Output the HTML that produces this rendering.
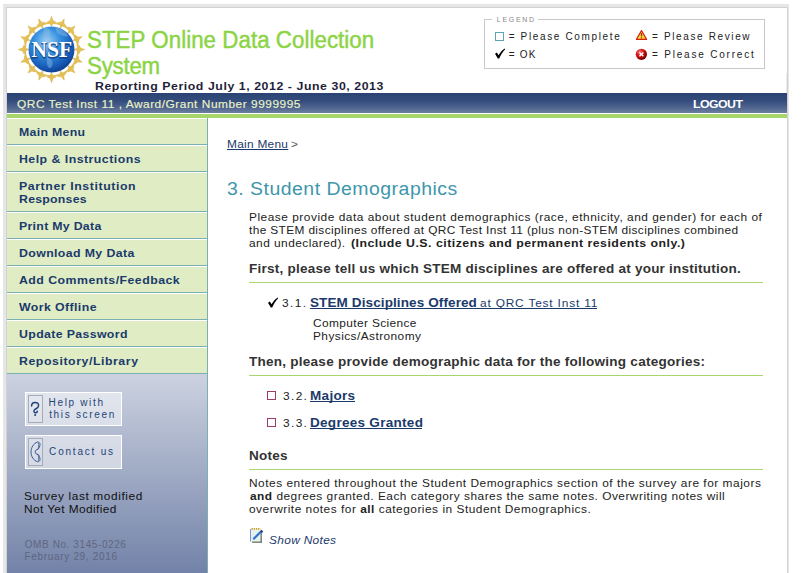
<!DOCTYPE html>
<html><head><meta charset="utf-8">
<style>
html,body{margin:0;padding:0;}
body{width:801px;height:573px;overflow:hidden;position:relative;background:#fff;font-family:"Liberation Sans",sans-serif;}
.a{position:absolute;}
.t{position:absolute;white-space:nowrap;}
</style></head><body>
<div class="a" style="left:3px;top:4px;width:786px;height:580px;background:#e6e6e6"></div>
<div class="a" style="left:6px;top:7px;width:782px;height:580px;background:#d2d2d2"></div>
<div class="a" style="left:7px;top:8px;width:780px;height:580px;background:#fff"></div>
<div class="a" style="left:786px;top:73px;width:1px;height:20px;background:#ebebeb"></div>
<svg class="a" style="left:0;top:0" width="110" height="95" viewBox="0 0 110 95">
<defs>
<radialGradient id="gl" cx="0.4" cy="0.32" r="0.72">
<stop offset="0" stop-color="#a0d2f6"/><stop offset="0.38" stop-color="#3892e0"/><stop offset="0.78" stop-color="#175cb8"/><stop offset="1" stop-color="#0e3c8c"/>
</radialGradient>
</defs>
<g fill="#e6c258" stroke="#d4ad40" stroke-width="0.5"><polygon points="51.50,16.30 50.09,20.49 47.30,21.90 50.09,23.31 51.50,26.50 52.91,23.31 55.70,21.90 52.91,20.49"/><polygon points="64.21,18.83 61.30,22.15 58.18,22.39 60.21,24.77 60.30,28.25 62.83,25.85 65.94,25.61 63.91,23.24"/><polygon points="74.98,26.02 71.02,27.98 68.05,27.01 69.02,29.98 67.76,33.24 71.02,31.98 73.99,32.95 73.02,29.98"/><polygon points="82.17,36.79 77.76,37.09 75.39,35.06 75.15,38.17 72.75,40.70 76.23,40.79 78.61,42.82 78.85,39.70"/><polygon points="84.70,49.50 80.51,48.09 79.10,45.30 77.69,48.09 74.50,49.50 77.69,50.91 79.10,53.70 80.51,50.91"/><polygon points="82.17,62.21 78.85,59.30 78.61,56.18 76.23,58.21 72.75,58.30 75.15,60.83 75.39,63.94 77.76,61.91"/><polygon points="74.98,72.98 73.02,69.02 73.99,66.05 71.02,67.02 67.76,65.76 69.02,69.02 68.05,71.99 71.02,71.02"/><polygon points="64.21,80.17 63.91,75.76 65.94,73.39 62.83,73.15 60.30,70.75 60.21,74.23 58.18,76.61 61.30,76.85"/><polygon points="51.50,82.70 52.91,78.51 55.70,77.10 52.91,75.69 51.50,72.50 50.09,75.69 47.30,77.10 50.09,78.51"/><polygon points="38.79,80.17 41.70,76.85 44.82,76.61 42.79,74.23 42.70,70.75 40.17,73.15 37.06,73.39 39.09,75.76"/><polygon points="28.02,72.98 31.98,71.02 34.95,71.99 33.98,69.02 35.24,65.76 31.98,67.02 29.01,66.05 29.98,69.02"/><polygon points="20.83,62.21 25.24,61.91 27.61,63.94 27.85,60.83 30.25,58.30 26.77,58.21 24.39,56.18 24.15,59.30"/><polygon points="18.30,49.50 22.49,50.91 23.90,53.70 25.31,50.91 28.50,49.50 25.31,48.09 23.90,45.30 22.49,48.09"/><polygon points="20.83,36.79 24.15,39.70 24.39,42.82 26.77,40.79 30.25,40.70 27.85,38.17 27.61,35.06 25.24,37.09"/><polygon points="28.02,26.02 29.98,29.98 29.01,32.95 31.98,31.98 35.24,33.24 33.98,29.98 34.95,27.01 31.98,27.98"/><polygon points="38.79,18.83 39.09,23.24 37.06,25.61 40.17,25.85 42.70,28.25 42.79,24.77 44.82,22.39 41.70,22.15"/></g>
<circle cx="51.5" cy="49.5" r="26.6" fill="none" stroke="#e2bf55" stroke-width="1.9"/>
<circle cx="51.5" cy="49.5" r="23" fill="url(#gl)"/>
<g fill="#8fbde8" opacity="0.45"><path d="M44,28 C48,27 52,30 50,34 C47,37 52,40 49,43 C46,41 42,36 44,28Z"/><path d="M55,27 C60,28 66,31 68,36 C64,38 60,34 57,33Z"/><path d="M47,57 C50,58 54,61 52,66 C50,70 48,68 47,64Z"/></g>
<text x="51.8" y="57.3" text-anchor="middle" font-family="Liberation Serif" font-weight="bold" font-size="23.5" fill="#0d3270" stroke="#0d3270" stroke-width="1.2" opacity="0.7" transform="translate(0.3,0.5)" textLength="41" lengthAdjust="spacingAndGlyphs">NSF</text>
<text x="51.8" y="57.3" text-anchor="middle" font-family="Liberation Serif" font-weight="bold" font-size="23.5" fill="#fff" textLength="41" lengthAdjust="spacingAndGlyphs">NSF</text>
</svg>
<div id="t1" class="t" style="left:86.74px;top:27.03px;font-size:23px;line-height:26px;font-weight:normal;color:#8bd444;letter-spacing:0.045px;transform:scaleX(0.970);transform-origin:0 0;-webkit-text-stroke:0.45px #8bd444;">STEP Online Data Collection</div>
<div id="t2" class="t" style="left:86.89px;top:53.03px;font-size:23px;line-height:26px;font-weight:normal;color:#8bd444;letter-spacing:-0.246px;transform:scaleX(0.970);transform-origin:0 0;-webkit-text-stroke:0.45px #8bd444;">System</div>
<div id="rep" class="t" style="left:94.66px;top:79.69px;font-size:11px;line-height:13px;font-weight:bold;color:#1f1f3a;letter-spacing:0.502px;transform:scaleX(1.120);transform-origin:0 0;">Reporting Period July 1, 2012 - June 30, 2013</div>
<div class="a" style="left:484px;top:19px;width:279px;height:48px;border:1px solid #c9c9c9"></div>
<div class="a" style="left:492px;top:18px;width:46px;height:3px;background:#fff"></div>
<div id="lg" class="t" style="left:496.84px;top:15.07px;font-size:7px;line-height:9px;font-weight:normal;color:#888;letter-spacing:1.684px;">LEGEND</div>
<div class="a" style="left:495px;top:32px;width:7px;height:7px;border:1px solid #5aa5b6"></div>
<svg class="a" style="left:494px;top:48.3px" width="12" height="12" viewBox="0 0 12 12"><path d="M1,5.8 L2.9,4.6 L4.5,7.3 C6.3,4.3 8.3,2 10.8,0.5 L11.2,1.2 C8.8,3.6 6.7,7 5.2,10.6 L3.8,10.6 Z" fill="#000"/></svg>
<svg class="a" style="left:635px;top:29px" width="13" height="12" viewBox="0 0 13 12"><path d="M6.5,1.6 L11.6,10.4 L1.4,10.4 Z" fill="#e6e23a" stroke="#d8200c" stroke-width="1.15" stroke-linejoin="round"/><path d="M6.5,4.2 L6.5,7.4" stroke="#c81808" stroke-width="1.3"/><rect x="5.85" y="8.2" width="1.3" height="1.2" fill="#c81808"/></svg>
<svg class="a" style="left:635px;top:48px" width="13" height="13" viewBox="0 0 13 13"><defs><radialGradient id="rc" cx="0.35" cy="0.3" r="0.8"><stop offset="0" stop-color="#f07a7a"/><stop offset="0.45" stop-color="#d01010"/><stop offset="0.8" stop-color="#8a0000"/><stop offset="1" stop-color="#4a0000"/></radialGradient></defs><circle cx="6.4" cy="6.3" r="5.6" fill="url(#rc)"/><path d="M4.4,4.4 L8.4,8.2 M8.4,4.4 L4.4,8.2" stroke="#fff" stroke-width="1.35"/></svg>
<div id="l1" class="t" style="left:508.71px;top:30.54px;font-size:10px;line-height:12px;font-weight:normal;color:#222;letter-spacing:1.640px;">= Please Complete</div>
<div id="l2" class="t" style="left:508.71px;top:48.53px;font-size:10px;line-height:12px;font-weight:normal;color:#222;letter-spacing:1.180px;">= OK</div>
<div id="l3" class="t" style="left:652.08px;top:30.54px;font-size:10px;line-height:12px;font-weight:normal;color:#222;letter-spacing:1.624px;">= Please Review</div>
<div id="l4" class="t" style="left:652.08px;top:48.53px;font-size:10px;line-height:12px;font-weight:normal;color:#222;letter-spacing:1.791px;">= Please Correct</div>
<div class="a" style="left:7px;top:93px;width:780px;height:20px;background:linear-gradient(#2a4373 0%,#344d7d 40%,#51668f 75%,#6c7fa2 100%)"></div>
<div class="a" style="left:7px;top:114px;width:780px;height:4px;background:#a8d66c"></div>
<div id="qrc" class="t" style="left:16.62px;top:97.69px;font-size:11px;line-height:13px;font-weight:normal;color:#eaf3c6;letter-spacing:0.490px;transform:scaleX(1.080);transform-origin:0 0;-webkit-text-stroke:0.15px #eaf3c6;">QRC Test Inst 11 , Award/Grant Number 9999995</div>
<div id="logout" class="t" style="left:692.70px;top:97.69px;font-size:11px;line-height:13px;font-weight:bold;color:#fff;letter-spacing:-0.493px;transform:scaleX(1.120);transform-origin:0 0;">LOGOUT</div>
<div class="a" style="left:7px;top:118px;width:200px;height:256px;background:#dfecc4"></div>
<div class="a" style="left:7px;top:374px;width:200px;height:200px;background:linear-gradient(#ccd2e0,#7282a8)"></div>
<div class="a" style="left:7px;top:118px;width:200px;height:1px;background:#fff"></div>
<div class="a" style="left:7px;top:144px;width:200px;height:1px;background:#7ab0b2"></div>
<div id="s0_0" class="t" style="left:18.85px;top:125.69px;font-size:11px;line-height:13px;font-weight:bold;color:#1b3a6b;letter-spacing:0.264px;transform:scaleX(1.120);transform-origin:0 0;">Main Menu</div>
<div class="a" style="left:7px;top:145px;width:200px;height:1px;background:#fff"></div>
<div class="a" style="left:7px;top:171px;width:200px;height:1px;background:#7ab0b2"></div>
<div id="s1_0" class="t" style="left:18.85px;top:152.69px;font-size:11px;line-height:13px;font-weight:bold;color:#1b3a6b;letter-spacing:0.424px;transform:scaleX(1.120);transform-origin:0 0;">Help &amp; Instructions</div>
<div class="a" style="left:7px;top:172px;width:200px;height:1px;background:#fff"></div>
<div class="a" style="left:7px;top:211px;width:200px;height:1px;background:#7ab0b2"></div>
<div id="s2_0" class="t" style="left:18.85px;top:179.69px;font-size:11px;line-height:13px;font-weight:bold;color:#1b3a6b;letter-spacing:0.519px;transform:scaleX(1.120);transform-origin:0 0;">Partner Institution</div>
<div id="s2_1" class="t" style="left:18.85px;top:192.69px;font-size:11px;line-height:13px;font-weight:bold;color:#1b3a6b;letter-spacing:0.205px;transform:scaleX(1.120);transform-origin:0 0;">Responses</div>
<div class="a" style="left:7px;top:212px;width:200px;height:1px;background:#fff"></div>
<div class="a" style="left:7px;top:238px;width:200px;height:1px;background:#7ab0b2"></div>
<div id="s3_0" class="t" style="left:18.85px;top:219.69px;font-size:11px;line-height:13px;font-weight:bold;color:#1b3a6b;letter-spacing:0.262px;transform:scaleX(1.120);transform-origin:0 0;">Print My Data</div>
<div class="a" style="left:7px;top:239px;width:200px;height:1px;background:#fff"></div>
<div class="a" style="left:7px;top:265px;width:200px;height:1px;background:#7ab0b2"></div>
<div id="s4_0" class="t" style="left:18.85px;top:246.69px;font-size:11px;line-height:13px;font-weight:bold;color:#1b3a6b;letter-spacing:0.340px;transform:scaleX(1.120);transform-origin:0 0;">Download My Data</div>
<div class="a" style="left:7px;top:266px;width:200px;height:1px;background:#fff"></div>
<div class="a" style="left:7px;top:292px;width:200px;height:1px;background:#7ab0b2"></div>
<div id="s5_0" class="t" style="left:19.36px;top:273.69px;font-size:11px;line-height:13px;font-weight:bold;color:#1b3a6b;letter-spacing:0.417px;transform:scaleX(1.120);transform-origin:0 0;">Add Comments/Feedback</div>
<div class="a" style="left:7px;top:293px;width:200px;height:1px;background:#fff"></div>
<div class="a" style="left:7px;top:319px;width:200px;height:1px;background:#7ab0b2"></div>
<div id="s6_0" class="t" style="left:19.31px;top:300.69px;font-size:11px;line-height:13px;font-weight:bold;color:#1b3a6b;letter-spacing:0.363px;transform:scaleX(1.120);transform-origin:0 0;">Work Offline</div>
<div class="a" style="left:7px;top:320px;width:200px;height:1px;background:#fff"></div>
<div class="a" style="left:7px;top:346px;width:200px;height:1px;background:#7ab0b2"></div>
<div id="s7_0" class="t" style="left:19.11px;top:327.69px;font-size:11px;line-height:13px;font-weight:bold;color:#1b3a6b;letter-spacing:0.323px;transform:scaleX(1.120);transform-origin:0 0;">Update Password</div>
<div class="a" style="left:7px;top:347px;width:200px;height:1px;background:#fff"></div>
<div class="a" style="left:7px;top:373px;width:200px;height:1px;background:#7ab0b2"></div>
<div id="s8_0" class="t" style="left:18.85px;top:354.69px;font-size:11px;line-height:13px;font-weight:bold;color:#1b3a6b;letter-spacing:0.496px;transform:scaleX(1.120);transform-origin:0 0;">Repository/Library</div>
<div class="a" style="left:207px;top:118px;width:1px;height:460px;background:#7ab0b2"></div>
<div class="a" style="left:25px;top:392px;width:95px;height:32px;border:1px solid #fff;background:rgba(255,255,255,0.5)"></div><div class="a" style="left:28px;top:395px;width:13px;height:26px;border:1px solid #a6abb8;background:rgba(255,255,255,0.12)"></div>
<div class="a" style="left:25px;top:435px;width:95px;height:32px;border:1px solid #fff;background:rgba(255,255,255,0.5)"></div><div class="a" style="left:28px;top:438px;width:13px;height:26px;border:1px solid #a6abb8;background:rgba(255,255,255,0.12)"></div>
<svg class="a" style="left:26px;top:393px" width="20" height="32" viewBox="26 393 20 32"><path d="M31.6,406 C31.6,403.5 33.1,402.4 35.1,402.4 C37.1,402.4 38.6,403.6 38.6,405.5 C38.6,407.5 36.6,408.4 35,409.4 C33.5,410.4 33.6,412.4 35.1,412.7 C36.4,412.9 37.3,412 37.3,411.2" fill="none" stroke="#1e4478" stroke-width="1.5" stroke-linecap="round"/><circle cx="35.1" cy="415.1" r="1" fill="#1e4478"/></svg>
<svg class="a" style="left:26px;top:436px" width="20" height="32" viewBox="26 436 20 32"><path d="M37.5,442 C33.5,443.5 31,447.5 31,452 C31,456.5 33.5,460.5 37.5,461.7 C39,461.8 40,461 40,459.5 C40,457.5 39,455 38,454.3 C36.5,454.5 35.2,453.5 35.2,452 C35.2,450.5 36.5,449.3 38,449.3 C39,448.5 40,446 40,444.3 C40,442.8 39,442 37.5,442 Z" fill="none" stroke="#2a4a8a" stroke-width="0.9"/><path d="M38.3,443 C38.8,445 38.6,447.5 38,449.3 M38,454.3 C38.6,456 38.8,458.5 38.3,460.8" fill="none" stroke="#2a4a8a" stroke-width="0.7"/></svg>
<div id="b1" class="t" style="left:48.51px;top:396.54px;font-size:10px;line-height:12px;font-weight:normal;color:#1e4478;letter-spacing:1.671px;">Help with</div>
<div id="b2" class="t" style="left:49.16px;top:408.54px;font-size:10px;line-height:12px;font-weight:normal;color:#1e4478;letter-spacing:1.688px;">this screen</div>
<div id="b3" class="t" style="left:49.12px;top:445.54px;font-size:10px;line-height:12px;font-weight:normal;color:#1e4478;letter-spacing:1.798px;">Contact us</div>
<div id="sv1" class="t" style="left:24.35px;top:489.69px;font-size:11px;line-height:13px;font-weight:normal;color:#111;letter-spacing:0.558px;transform:scaleX(1.080);transform-origin:0 0;">Survey last modified</div>
<div id="sv2" class="t" style="left:24.14px;top:502.69px;font-size:11px;line-height:13px;font-weight:normal;color:#111;letter-spacing:0.362px;transform:scaleX(1.080);transform-origin:0 0;">Not Yet Modified</div>
<div id="om1" class="t" style="left:24.72px;top:538.53px;font-size:10px;line-height:12px;font-weight:normal;color:#5f6680;letter-spacing:0.592px;">OMB No. 3145-0226</div>
<div id="om2" class="t" style="left:24.49px;top:550.53px;font-size:10px;line-height:12px;font-weight:normal;color:#5f6680;letter-spacing:0.678px;">February 29, 2016</div>
<div id="bc" class="t" style="left:226.74px;top:137.69px;font-size:11px;line-height:13px;font-weight:normal;color:#1b3a6b;letter-spacing:0.256px;transform:scaleX(1.080);transform-origin:0 0;text-decoration:underline">Main Menu</div>
<div id="bcg" class="t" style="left:291.31px;top:137.69px;font-size:11px;line-height:13px;font-weight:normal;color:#555;letter-spacing:14.852px;transform:scaleX(1.080);transform-origin:0 0;">&gt;</div>
<div id="h1" class="t" style="left:227.45px;top:177.76px;font-size:18px;line-height:22px;font-weight:normal;color:#3e96ab;letter-spacing:0.458px;transform:scaleX(1.080);transform-origin:0 0;">3. Student Demographics</div>
<div id="p1" class="t" style="left:248.62px;top:210.69px;font-size:11px;line-height:13px;font-weight:normal;color:#222;letter-spacing:0.478px;transform:scaleX(1.080);transform-origin:0 0;">Please provide data about student demographics (race, ethnicity, and gender) for each of</div>
<div id="p2" class="t" style="left:249.34px;top:223.69px;font-size:11px;line-height:13px;font-weight:normal;color:#222;letter-spacing:0.337px;transform:scaleX(1.080);transform-origin:0 0;">the STEM disciplines offered at QRC Test Inst 11 (plus non-STEM disciplines combined</div>
<div id="p3a" class="t" style="left:249.42px;top:236.69px;font-size:11px;line-height:13px;font-weight:normal;color:#222;letter-spacing:0.431px;transform:scaleX(1.080);transform-origin:0 0;">and undeclared).</div>
<div id="p3b" class="t" style="left:350.62px;top:236.69px;font-size:11px;line-height:13px;font-weight:bold;color:#222;letter-spacing:0.437px;transform:scaleX(1.120);transform-origin:0 0;">(Include U.S. citizens and permanent residents only.)</div>
<div id="hd1" class="t" style="left:248.68px;top:261.00px;font-size:13px;line-height:15px;font-weight:bold;color:#333;letter-spacing:0.224px;transform:scaleX(1.040);transform-origin:0 0;">First, please tell us which STEM disciplines are offered at your institution.</div>
<div class="a" style="left:249px;top:282px;width:514px;height:1px;background:#a8d66c"></div>
<svg class="a" style="left:267px;top:296.5px" width="12" height="12" viewBox="0 0 12 12"><path d="M1,5.8 L2.9,4.6 L4.5,7.3 C6.3,4.3 8.3,2 10.8,0.5 L11.2,1.2 C8.8,3.6 6.7,7 5.2,10.6 L3.8,10.6 Z" fill="#000"/></svg>
<div id="n31" class="t" style="left:281.89px;top:296.69px;font-size:11px;line-height:13px;font-weight:normal;color:#222;letter-spacing:1.296px;transform:scaleX(1.080);transform-origin:0 0;">3.1.</div>
<div id="stem" class="t" style="left:309.85px;top:295.00px;font-size:13px;line-height:15px;font-weight:bold;color:#1b3a6b;letter-spacing:0.098px;transform:scaleX(1.040);transform-origin:0 0;">STEM Disciplines Offered</div>
<div id="atq" class="t" style="left:480.33px;top:296.69px;font-size:11px;line-height:13px;font-weight:normal;color:#1b3a6b;letter-spacing:0.758px;transform:scaleX(1.080);transform-origin:0 0;">at QRC Test Inst 11</div>
<div class="a" style="left:310px;top:308px;width:287px;height:1px;background:#1b3a6b"></div>
<div id="cs" class="t" style="left:313.21px;top:316.69px;font-size:11px;line-height:13px;font-weight:normal;color:#222;letter-spacing:0.355px;transform:scaleX(1.080);transform-origin:0 0;">Computer Science</div>
<div id="pa" class="t" style="left:312.60px;top:329.69px;font-size:11px;line-height:13px;font-weight:normal;color:#222;letter-spacing:0.400px;transform:scaleX(1.080);transform-origin:0 0;">Physics/Astronomy</div>
<div id="hd2" class="t" style="left:249.20px;top:354.00px;font-size:13px;line-height:15px;font-weight:bold;color:#333;letter-spacing:0.241px;transform:scaleX(1.040);transform-origin:0 0;">Then, please provide demographic data for the following categories:</div>
<div class="a" style="left:249px;top:375px;width:514px;height:1px;background:#a8d66c"></div>
<div class="a" style="left:267px;top:391px;width:7px;height:7px;border:1px solid #9c3c6c"></div>
<div id="n32" class="t" style="left:282.57px;top:389.69px;font-size:11px;line-height:13px;font-weight:normal;color:#222;letter-spacing:1.267px;transform:scaleX(1.080);transform-origin:0 0;">3.2.</div>
<div id="lk32" class="t" style="left:309.91px;top:388.00px;font-size:13px;line-height:15px;font-weight:bold;color:#1b3a6b;letter-spacing:0.295px;transform:scaleX(1.040);transform-origin:0 0;">Majors</div>
<div class="a" style="left:310px;top:401px;width:45px;height:1px;background:#1b3a6b"></div>
<div class="a" style="left:267px;top:418px;width:7px;height:7px;border:1px solid #9c3c6c"></div>
<div id="n33" class="t" style="left:282.57px;top:416.69px;font-size:11px;line-height:13px;font-weight:normal;color:#222;letter-spacing:1.267px;transform:scaleX(1.080);transform-origin:0 0;">3.3.</div>
<div id="lk33" class="t" style="left:309.91px;top:415.00px;font-size:13px;line-height:15px;font-weight:bold;color:#1b3a6b;letter-spacing:0.271px;transform:scaleX(1.040);transform-origin:0 0;">Degrees Granted</div>
<div class="a" style="left:310px;top:428px;width:112px;height:1px;background:#1b3a6b"></div>
<div id="notes" class="t" style="left:248.51px;top:448.00px;font-size:13px;line-height:15px;font-weight:bold;color:#333;letter-spacing:0.228px;transform:scaleX(1.040);transform-origin:0 0;">Notes</div>
<div class="a" style="left:249px;top:469px;width:514px;height:1px;background:#a8d66c"></div>
<div id="np1" class="t" style="left:248.77px;top:476.69px;font-size:11px;line-height:13px;font-weight:normal;color:#222;letter-spacing:0.483px;transform:scaleX(1.080);transform-origin:0 0;">Notes entered throughout the Student Demographics section of the survey are for majors</div>
<div id="np2" class="t" style="left:249.53px;top:489.69px;font-size:11px;line-height:13px;font-weight:normal;color:#222;letter-spacing:0.456px;transform:scaleX(1.080);transform-origin:0 0;"><b>and</b> degrees granted. Each category shares the same notes. Overwriting notes will</div>
<div id="np3" class="t" style="left:249.02px;top:502.69px;font-size:11px;line-height:13px;font-weight:normal;color:#222;letter-spacing:0.469px;transform:scaleX(1.080);transform-origin:0 0;">overwrite notes for <b>all</b> categories in Student Demographics.</div>
<svg class="a" style="left:249px;top:527px" width="16" height="17" viewBox="0 0 16 17"><rect x="1.5" y="2.2" width="10.3" height="12.5" fill="#e2f4ea"/><rect x="11.6" y="5" width="1.1" height="10.6" fill="#555"/><rect x="3" y="14.6" width="9.7" height="1.1" fill="#555"/><rect x="1" y="2" width="1" height="12.6" fill="#8c8ce0"/><path d="M2.5,1.8 h9" stroke="#c89a20" stroke-width="1.8" stroke-dasharray="1.3,0.9"/><path d="M4.3,12.3 L12.3,4.3" stroke="#2f6fd8" stroke-width="2.2"/><path d="M11.8,3.6 L13.6,5.2" stroke="#2a3a6a" stroke-width="2"/></svg>
<div id="shn" class="t" style="left:268.78px;top:533.69px;font-size:11px;line-height:13px;font-weight:normal;color:#1b3a6b;letter-spacing:0.306px;transform:scaleX(1.080);transform-origin:0 0;font-style:italic">Show Notes</div>
</body></html>
